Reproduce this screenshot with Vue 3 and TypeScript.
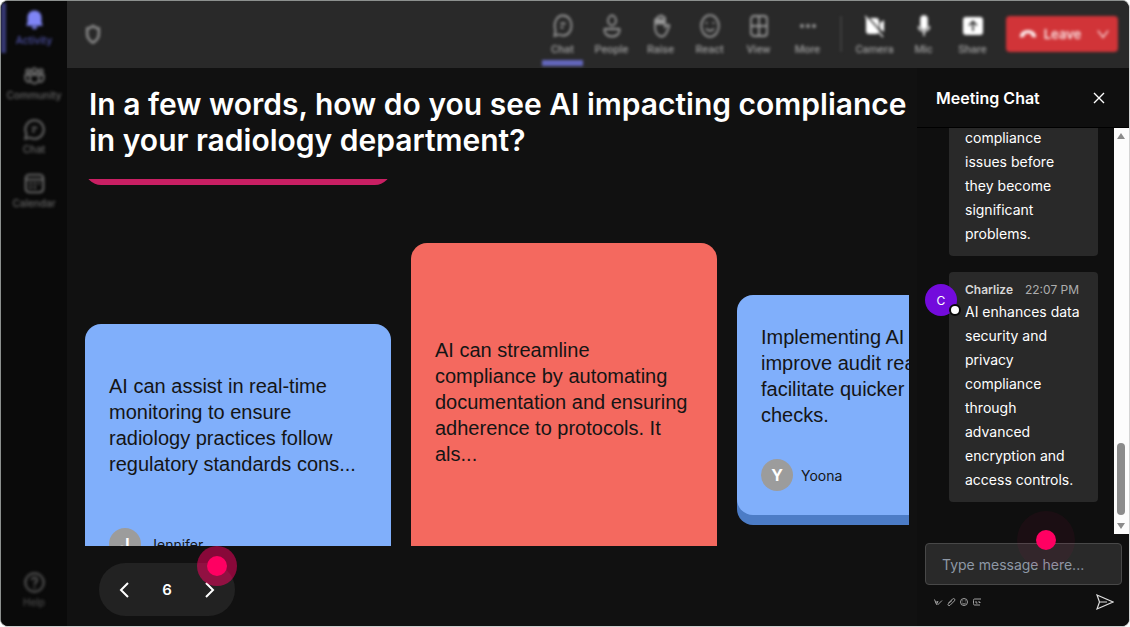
<script setup lang="ts">
import { ref } from 'vue'

interface NavItem { id: string; label: string }
interface Card { text: string; author?: string; tone: string; size: string }

const railItems: NavItem[] = [
  { id: 'activity', label: 'Activity' },
  { id: 'community', label: 'Community' },
  { id: 'chat', label: 'Chat' },
  { id: 'calendar', label: 'Calendar' },
]

const tools: NavItem[] = [
  { id: 'chat', label: 'Chat' },
  { id: 'people', label: 'People' },
  { id: 'raise', label: 'Raise' },
  { id: 'react', label: 'React' },
  { id: 'view', label: 'View' },
  { id: 'more', label: 'More' },
]

const devices: NavItem[] = [
  { id: 'camera', label: 'Camera' },
  { id: 'mic', label: 'Mic' },
  { id: 'share', label: 'Share' },
]

const cards: Card[] = [
  {
    text: 'AI can assist in real-time monitoring to ensure radiology practices follow regulatory standards cons...',
    author: 'Jennifer',
    tone: 'blue',
    size: 'medium',
  },
  {
    text: 'AI can streamline compliance by automating documentation and ensuring adherence to protocols. It als...',
    tone: 'coral',
    size: 'large',
  },
  {
    text: 'Implementing AI can help improve audit readiness and facilitate quicker compliance checks.',
    author: 'Yoona',
    tone: 'blue',
    size: 'small',
  },
]

const page = ref(6)
const draft = ref('')
</script>

<template>
  <div class="shell">
    <nav class="rail" aria-label="Main">
      <div class="soft rail-items">
        <button
          v-for="item in railItems"
          :key="item.id"
          type="button"
          class="rail-item"
          :class="{ active: item.id === 'activity' }"
        >
          <svg v-if="item.id === 'activity'" viewBox="0 0 24 24" fill="currentColor">
            <path d="M12 1C7.300 1 4 4.500 4 9v5.500L2.500 18.500h19L20 14.500V9c0-4.500-3.300-8-8-8z" />
            <path d="M8.500 19.500h7c-.6 2-1.800 3-3.500 3s-2.900-1-3.500-3z" />
          </svg>
          <svg v-else-if="item.id === 'community'" viewBox="0 0 24 24" fill="none" stroke="currentColor" stroke-width="2.400">
            <circle cx="12" cy="6.500" r="2.800" />
            <circle cx="4.800" cy="7" r="2.200" />
            <circle cx="19.200" cy="7" r="2.200" />
            <path d="M7 11.500h10V16a5 5 0 0 1-10 0zM7 11.500H1.500V15a4 4 0 0 0 5.500 4M17 11.500h5.500V15a4 4 0 0 1-5.500 4" />
          </svg>
          <svg v-else-if="item.id === 'chat'" viewBox="0 0 24 24" fill="none" stroke="currentColor" stroke-width="2.400">
            <path d="M12 1.500a10.500 10.500 0 1 1-5 19.700L1.500 22.500l1.300-5.500A10.500 10.500 0 0 1 12 1.500z" />
            <path d="M9 10h6M9 14h3.500" />
          </svg>
          <svg v-else viewBox="0 0 24 24" fill="none" stroke="currentColor" stroke-width="2.400">
            <rect x="2" y="2" width="20" height="20" rx="4" />
            <path d="M2 7.500h20M6 12h3M11 12h3M6 16.500h3M11 16.500h3M16 12h2" />
          </svg>
          <span>{{ item.label }}</span>
        </button>
      </div>
      <div class="soft">
        <button type="button" class="rail-item help">
          <svg viewBox="0 0 24 24" fill="none" stroke="currentColor" stroke-width="2.800">
            <circle cx="12" cy="12" r="10.500" />
            <path d="M9 9.500c0-4 6-4 6 0 0 2-3 2.500-3 5M12 16.500v2" />
          </svg>
          <span>Help</span>
        </button>
      </div>
    </nav>

    <header class="topbar">
      <svg class="shield soft" viewBox="0 0 24 24" fill="none" stroke="currentColor" stroke-width="3">
        <path d="M12 2.500c2.500 2 4.500 2.800 7 3V12c0 5-3 8-7 10.500C8 20 5 17 5 12V5.500c2.500-.2 4.500-1 7-3z" />
      </svg>
      <div class="tools soft">
        <button
          v-for="tool in tools"
          :key="tool.id"
          type="button"
          class="tool"
          :class="{ current: tool.id === 'chat' }"
        >
          <svg v-if="tool.id === 'chat'" viewBox="0 0 20 24" fill="none" stroke="currentColor" stroke-width="1.800">
            <path d="M10 1.500c5 0 8.500 4.500 8.500 10s-3.500 10-8.500 10c-1.500 0-2.600-.3-4-1l-4.500 1.500 1-5.500c-2.500-7 1-15 7.500-15z" />
            <path d="M7.500 9.500h5M7.500 13.500h3" />
          </svg>
          <svg v-else-if="tool.id === 'people'" viewBox="0 0 20 24" fill="none" stroke="currentColor" stroke-width="1.800">
            <ellipse cx="10" cy="6.500" rx="4" ry="5" />
            <path d="M2.500 15h15c.8 4-2.500 7.500-7.500 7.500S1.700 19 2.500 15z" />
          </svg>
          <svg v-else-if="tool.id === 'raise'" viewBox="0 0 20 24" fill="none" stroke="currentColor" stroke-width="1.800">
            <path d="M4 13V6c0-1.500 2.500-1.500 2.500 0V3.500C6.500 2 9 2 9 3.500V2.500c0-1.500 2.500-1.500 2.500 0V4c0-1.500 2.500-1.500 2.500 0v9l2.500-2c1-.8 2.300.3 1.700 1.500-2 4-3 10-7.200 10-4 0-7-3.500-7-9.500z" />
            <path d="M4.500 5H13v5.500H4.500z" fill="currentColor" stroke="none" />
          </svg>
          <svg v-else-if="tool.id === 'react'" viewBox="0 0 20 24" fill="none" stroke="currentColor" stroke-width="1.800">
            <ellipse cx="10" cy="12" rx="8.800" ry="10.800" />
            <path d="M6 14.500c2 3 6 3 8 0M6.500 8v2M13.500 8v2" />
          </svg>
          <svg v-else-if="tool.id === 'view'" viewBox="0 0 20 24" fill="none" stroke="currentColor" stroke-width="1.800">
            <rect x="2" y="2" width="16" height="20" rx="3" />
            <path d="M10 2v20M2 12h16" />
          </svg>
          <svg v-else viewBox="0 0 20 24" fill="currentColor">
            <circle cx="4" cy="12" r="2" />
            <circle cx="10" cy="12" r="2" />
            <circle cx="16" cy="12" r="2" />
          </svg>
          <span>{{ tool.label }}</span>
        </button>
        <i class="divider"></i>
        <button v-for="device in devices" :key="device.id" type="button" class="tool device">
          <svg v-if="device.id === 'camera'" viewBox="0 0 20 24" fill="currentColor">
            <path d="M1 4h10c2 0 3 1 3 3v10c0 2-1 3-3 3H4c-2 0-3-1-3-3zM15 9l4-3v12l-4-3z" />
            <path d="M1 1l19 21" stroke="#292929" stroke-width="1.500" />
            <path d="M0 2l18 21" stroke="currentColor" stroke-width="1.200" />
          </svg>
          <svg v-else-if="device.id === 'mic'" viewBox="0 0 20 24" fill="none" stroke="currentColor" stroke-width="1.500">
            <rect x="7" y="2" width="6" height="13" rx="3" fill="currentColor" />
            <path d="M4.500 12c0 7 11 7 11 0M10 17.500V22" />
          </svg>
          <svg v-else viewBox="0 0 20 24">
            <rect x="0" y="3" width="20" height="18" rx="3" fill="currentColor" />
            <path d="M10 17V8M6 11.500L10 7.500l4 4" fill="none" stroke="#292929" stroke-width="1.600" />
          </svg>
          <span>{{ device.label }}</span>
        </button>
        <div class="leave">
          <button type="button" class="leave-main">
            <svg viewBox="0 0 20 12" fill="currentColor">
              <path d="M1 7.500C2 3.500 6 1.500 10 1.500s8 2 9 6c.3 1.500-.2 2.700-1.200 2.500l-3-.6c-.8-.2-1.200-.8-1.300-2L13 6c-2-.8-4-.8-6 0l-.5 1.400c-.1 1.200-.5 1.800-1.300 2l-3 .6c-1 .2-1.500-1-1.200-2.500z" />
            </svg>
            Leave
          </button>
          <button type="button" class="leave-more" aria-label="Leave options">
            <svg viewBox="0 0 14 10" fill="none" stroke="currentColor" stroke-width="1.500"><path d="M1 1l6 8 6-8" /></svg>
          </button>
        </div>
      </div>
    </header>

    <main class="stage">
      <h1>In a few words, how do you see AI impacting compliance in your radiology department?</h1>
      <div class="board">
        <div class="previous"></div>
        <article v-for="card in cards" :key="card.text" class="card" :class="[card.tone, card.size]">
          <p>{{ card.text }}</p>
          <footer v-if="card.author">
            <span class="initial">{{ card.author.charAt(0) }}</span>
            <span>{{ card.author }}</span>
          </footer>
        </article>
      </div>
      <div class="pager">
        <button type="button" aria-label="Previous page" @click="page--">
          <svg viewBox="0 0 10 16"><path d="M9 1L2 8l7 7" /></svg>
        </button>
        <span>{{ page }}</span>
        <button type="button" aria-label="Next page" @click="page++">
          <svg viewBox="0 0 10 16"><path d="M1 1l7 7-7 7" /></svg>
        </button>
        <i class="beacon strong"></i>
      </div>
    </main>

    <aside class="chat">
      <header class="chat-head">
        <h2>Meeting Chat</h2>
        <button type="button" aria-label="Close chat">
          <svg viewBox="0 0 12 12"><path d="M1 1l10 10M11 1L1 11" /></svg>
        </button>
      </header>
      <div class="chat-body">
        <div class="messages">
          <div class="bubble continued"><p>compliance issues before they become significant problems.</p></div>
          <div class="bubble">
            <span class="avatar">C<i class="status"></i></span>
            <div class="meta"><b>Charlize</b><time>22:07 PM</time></div>
            <p>AI enhances data security and privacy compliance through advanced encryption and access controls.</p>
          </div>
        </div>
        <div class="scroll" aria-hidden="true">
          <svg viewBox="0 0 10 8"><path d="M5 1l4 6H1z" /></svg>
          <i class="thumb"></i>
          <svg viewBox="0 0 10 8"><path d="M5 7L1 1h8z" /></svg>
        </div>
      </div>
      <form class="composer" @submit.prevent>
        <input v-model="draft" type="text" aria-label="Message" placeholder="Type message here..." />
        <i class="beacon faint"></i>
        <div class="actions">
          <button type="button" aria-label="Format">
            <svg viewBox="0 0 10 10"><path d="M1.500 2.500l2 5L5 4M2 5h3M4.500 8L9 3.500" /></svg>
          </button>
          <button type="button" aria-label="Attach">
            <svg viewBox="0 0 10 10"><path d="M2.500 6l4-4c1.500-1.200 3 .3 2 1.800l-4.500 4.500c-1.200 1-2.700-.3-1.700-1.600L6 3.500" /></svg>
          </button>
          <button type="button" aria-label="Emoji">
            <svg viewBox="0 0 10 10"><circle cx="5" cy="5" r="3.500" /><path d="M3.300 6c1 1.300 2.400 1.300 3.400 0M3.700 3.500v.8M6.300 3.500v.8" /></svg>
          </button>
          <button type="button" aria-label="GIF">
            <svg viewBox="0 0 10 10"><path d="M9 2H2.500C1.500 2 1.500 2.500 1.500 5s0 3 1 3H8M4 4v2h1.500M7 4v1.500h1.500" /></svg>
          </button>
          <button type="submit" class="send" aria-label="Send">
            <svg viewBox="0 0 18 16"><path d="M1 1l16 7L1 15l2.500-7zM3.500 8H11" /></svg>
          </button>
        </div>
      </form>
    </aside>
  </div>
</template>

<style>
html, body { margin: 0; background: #fff; }
</style>

<style scoped>
* { box-sizing: border-box; }
h1, h2, p { margin: 0; }
button {
  display: flex;
  align-items: center;
  justify-content: center;
  padding: 0;
  border: 0;
  background: none;
  color: inherit;
  font: inherit;
}
svg { display: block; flex: none; }

.shell {
  display: grid;
  grid-template-columns: 66px minmax(0, 1fr) 212px;
  grid-template-rows: 67px minmax(0, 1fr);
  height: 100vh;
  overflow: hidden;
  border: 1px solid #8c908e;
  border-right-color: #d4d4d4;
  border-bottom-color: #cfcfcf;
  border-radius: 8px;
  background: #111;
  color: #fff;
  font-family: Inter, "Liberation Sans", sans-serif;
}
.soft { filter: blur(1.4px); }

.rail {
  grid-row: 1 / 3;
  display: flex;
  flex-direction: column;
  justify-content: space-between;
  padding: 2px 0 12px;
  background: #0a0a0a;
}
.rail-items { display: flex; flex-direction: column; }
.rail-item {
  flex-direction: column;
  gap: 2px;
  width: 100%;
  height: 54px;
  color: #666;
  font-size: 10px;
  font-weight: 500;
  line-height: 14px;
}
.rail-item svg { width: 21px; height: 21px; }
.rail-item.active {
  height: 50px;
  margin-bottom: 3px;
  padding-right: 5px;
  border-left: 5px solid #383a78;
  color: #7f85f5;
}
.rail-item.active svg { height: 22px; }
.rail-item.active span { color: #4e52a8; }
.rail-item.help { height: 48px; color: #4a4a4a; }

.topbar {
  grid-column: 2 / 4;
  display: flex;
  align-items: center;
  justify-content: space-between;
  padding: 0 11px 0 16px;
  background: #292929;
}
.shield { width: 20px; height: 20px; margin-bottom: 2px; color: #8c8c8c; }
.tools { display: flex; height: 100%; }
.tool {
  flex-direction: column;
  justify-content: flex-start;
  gap: 5px;
  width: 49px;
  padding-top: 13px;
  color: #999;
  font-family: Roboto, sans-serif;
  font-size: 11px;
  font-weight: 500;
  line-height: 14px;
}
.tool svg { width: 20px; height: 24px; }
.tool.current {
  width: 41px;
  height: 65px;
  margin: 0 4px;
  border-bottom: 6px solid #6467bd;
}
.divider { width: 2px; height: 36px; margin: 15px 8px 0; background: #3f3f3f; }
.device svg { color: #fff; }
.leave {
  display: flex;
  width: 112px;
  height: 36px;
  margin: 15px 0 0 9px;
  border-radius: 4px;
  background: #d13438;
  color: #fbe6e6;
}
.leave-main { flex: 1; gap: 7px; padding-left: 6px; font-size: 13px; font-weight: 600; }
.leave-main svg { width: 18px; height: 12px; }
.leave-more { width: 30px; }
.leave-more svg { width: 12px; height: 10px; }

.stage {
  display: flex;
  flex-direction: column;
  min-width: 0;
  padding: 18px 8px 10px 0;
}
h1 {
  padding-left: 22px;
  font-size: 30px;
  font-weight: 600;
  line-height: 36px;
}
.board {
  display: grid;
  grid-template-columns: repeat(3, 306px);
  grid-template-rows: 6px minmax(0, 1fr);
  align-items: start;
  column-gap: 20px;
  flex: 1;
  min-height: 0;
  margin-top: 21px;
  padding-left: 18px;
  overflow: hidden;
}
.previous {
  grid-column: 1 / 4;
  align-self: end;
  width: 306px;
  height: 48px;
  border-radius: 16px;
  background: #c91f63;
}
.card {
  padding: 24px;
  border-radius: 16px;
  color: #151515;
}
.card p {
  display: flex;
  align-items: center;
  font-family: "Liberation Sans", Arial, sans-serif;
  font-size: 20px;
  line-height: 26px;
}
.card footer { display: flex; align-items: center; gap: 8px; margin-top: 26px; font-size: 14px; }
.blue { background: #80affb; box-shadow: 0 10px 0 #4c7cc6; }
.coral { background: #f4695f; }
.medium { margin-top: 139px; }
.medium p { min-height: 154px; }
.large { margin-top: 58px; padding-bottom: 80px; }
.large p { min-height: 270px; }
.small { margin-top: 110px; }
.small p { min-height: 114px; }
.initial {
  display: grid;
  place-items: center;
  width: 32px;
  height: 32px;
  border-radius: 50%;
  background: #9c9c9c;
  color: #fff;
  font-size: 16px;
  font-weight: 700;
}

.pager {
  position: relative;
  display: flex;
  align-items: center;
  justify-content: space-between;
  width: 136px;
  height: 53px;
  margin: 17px 0 0 32px;
  padding: 0 20px;
  border-radius: 27px;
  background: #222;
  font-size: 15px;
  font-weight: 600;
}
.pager svg {
  width: 10px;
  height: 16px;
  fill: none;
  stroke: #fff;
  stroke-width: 2;
}
.beacon {
  position: absolute;
  display: grid;
  place-items: center;
  border-radius: 50%;
}
.beacon::after {
  content: "";
  width: 20px;
  height: 20px;
  border-radius: 50%;
  background: #ff0062;
}
.strong { right: -2px; top: -17px; width: 40px; height: 40px; background: rgba(255, 0, 98, 0.5); }
.faint { right: 54px; top: -23px; width: 58px; height: 58px; background: rgba(255, 0, 98, 0.05); }

.chat {
  display: flex;
  flex-direction: column;
  min-height: 0;
  background: #0f0f0f;
}
.chat-head {
  display: flex;
  align-items: center;
  justify-content: space-between;
  height: 60px;
  padding: 0 24px 0 19px;
  border-bottom: 1px solid #000;
}
h2 { font-size: 16px; font-weight: 600; }
.chat-head svg { width: 12px; height: 12px; fill: none; stroke: #fff; stroke-width: 1.4; }
.chat-body { display: flex; flex: 1; min-height: 0; }
.messages {
  display: flex;
  flex: 1;
  flex-direction: column;
  justify-content: flex-end;
  gap: 16px;
  min-width: 0;
  padding: 0 16px 32px 32px;
  overflow: hidden;
}
.bubble {
  position: relative;
  padding: 8px 16px 10px;
  border-radius: 4px;
  background: #292929;
}
.bubble.continued { padding-top: 0; border-radius: 0 0 4px 4px; }
.bubble p { font-size: 14px; line-height: 24px; }
.meta { display: flex; gap: 12px; color: #d6d6d6; font-size: 12px; line-height: 20px; }
.meta b { font-weight: 600; }
.meta time { color: #adadad; }
.avatar {
  position: absolute;
  left: -24px;
  top: 12px;
  display: grid;
  place-items: center;
  width: 32px;
  height: 32px;
  border-radius: 50%;
  background: #730bdc;
  font-size: 12px;
}
.status {
  position: absolute;
  right: -4px;
  bottom: 0;
  width: 12px;
  height: 12px;
  border: 2px solid #0a0a0a;
  border-radius: 50%;
  background: #fff;
}
.scroll {
  display: flex;
  flex-direction: column;
  align-items: center;
  width: 15px;
  padding: 4px 1px 4px 0;
  background: #fcfcfc;
}
.scroll svg { width: 10px; height: 8px; fill: #8b8b8b; }
.thumb { width: 8px; height: 72px; margin: auto 0 7px; border-radius: 4px; background: #8b8b8b; }

.composer { position: relative; padding: 9px 7px 15px 8px; }
.composer input {
  display: block;
  width: 100%;
  height: 42px;
  padding: 0 16px;
  border: 1px solid #484848;
  border-radius: 4px;
  background: #292929;
  color: #fff;
  font-family: inherit;
  font-size: 14px;
}
.composer input::placeholder { color: #8e98a5; opacity: 1; }
.actions { display: flex; align-items: center; gap: 3px; margin-top: 8px; padding: 0 8px; }
.actions svg { width: 10px; height: 10px; fill: none; stroke: #a2a2a2; stroke-width: 1; }
.actions .send { margin-left: auto; }
.actions .send svg { width: 18px; height: 18px; stroke: #ddd; stroke-width: 1.2; }
</style>
